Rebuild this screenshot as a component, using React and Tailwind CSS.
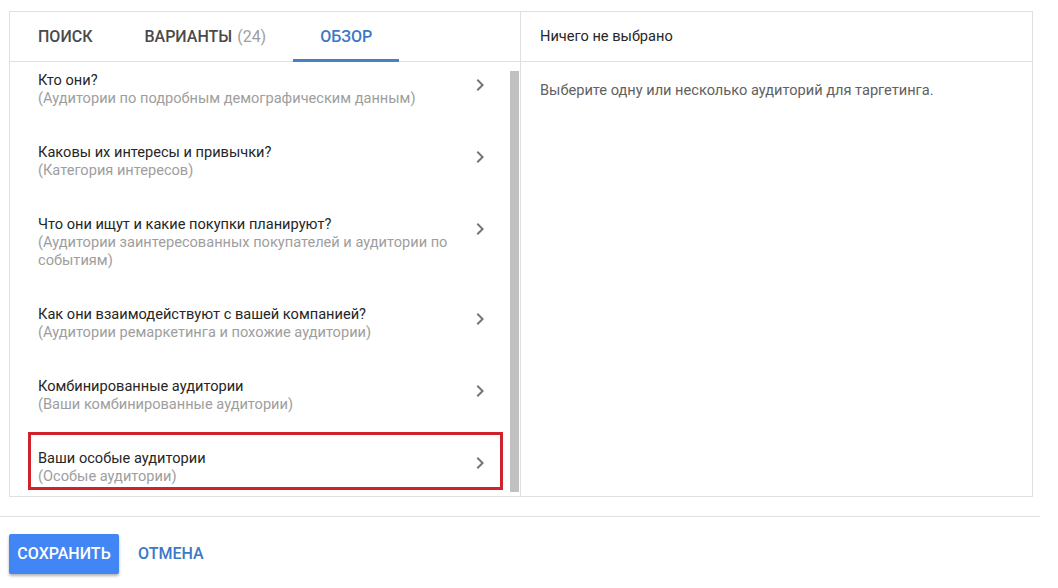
import React from "react";

const items = [
  { t: "Кто они?", s: "(Аудитории по подробным демографическим данным)" },
  { t: "Каковы их интересы и привычки?", s: "(Категория интересов)" },
  { t: "Что они ищут и какие покупки планируют?", s: "(Аудитории заинтересованных покупателей и аудитории по событиям)" },
  { t: "Как они взаимодействуют с вашей компанией?", s: "(Аудитории ремаркетинга и похожие аудитории)" },
  { t: "Комбинированные аудитории", s: "(Ваши комбинированные аудитории)" },
  { t: "Ваши особые аудитории", s: "(Особые аудитории)", sel: true },
];

function Chevron() {
  return (
    <svg width="24" height="24" viewBox="0 0 24 24" className="shrink-0 mt-[2px]">
      <path d="M10 6L8.59 7.41 13.17 12l-4.58 4.59L10 18l6-6z" fill="#757575" />
    </svg>
  );
}

export default function App() {
  return (
    <div className="w-[1058px] h-[588px] bg-white overflow-hidden" style={{ fontFamily: "Roboto, 'Noto Sans', sans-serif" }}>
      <div className="pt-[11px] pl-[9px]">
        <div className="w-[1024px] h-[486px] border border-[#e0e0e0] flex">
          {/* Left panel */}
          <div className="w-[511px] border-r border-[#e0e0e0] flex flex-col">
            <div className="h-[50px] border-b border-[#e0e0e0] flex items-stretch text-[16px] font-medium uppercase">
              <div className="pl-7 pr-[25px] flex items-center text-[#4a4a4a]">ПОИСК</div>
              <div className="px-[27px] flex items-center text-[#4a4a4a]">
                ВАРИАНТЫ<span className="ml-[5px] font-normal text-[#9e9e9e]">(24)</span>
              </div>
              <div className="relative w-[106px] flex items-center justify-center text-[#3b78c8]">
                ОБЗОР
                <div className="absolute left-0 right-0 -bottom-px h-[3px] bg-[#4a7fc1]" />
              </div>
            </div>
            <div className="flex-1 flex min-h-0">
              <div className="flex-1 overflow-hidden">
                <div className="-mt-[8px]">
                  {items.map((it, i) => (
                    <div
                      key={i}
                      className={
                        "ml-[18px] mr-[7px] pl-[7px] pr-[8px] pt-[14px] pb-[2px] border-[3px] flex items-start gap-2 " +
                        (it.sel ? "border-[#d0222b]" : "border-transparent") +
                        (i > 0 ? " mt-[14px]" : "")
                      }
                    >
                      <div className="flex-1 text-[14.6px] leading-[18px]">
                        <div className="text-[#262626]">{it.t}</div>
                        <div className="text-[#9e9e9e]">{it.s}</div>
                      </div>
                      <Chevron />
                    </div>
                  ))}
                </div>
              </div>
              <div className="w-[9px] pt-[9px] pb-[4px] mr-px">
                <div className="h-full bg-[#c1c1c1]" />
              </div>
            </div>
          </div>
          {/* Right panel */}
          <div className="flex-1 flex flex-col">
            <div className="h-[50px] border-b border-[#e0e0e0] flex items-center px-[19px] text-[14.6px] text-[#262626]">
              Ничего не выбрано
            </div>
            <div className="px-[19px] pt-[19px] text-[14.6px] leading-[18px] text-[#616161]">
              Выберите одну или несколько аудиторий для таргетинга.
            </div>
          </div>
        </div>
      </div>
      <div className="mt-[19px] w-[1040px] border-t border-[#e0e0e0]" />
      <div className="pl-[9px] pt-[17px] flex items-center gap-[19px]">
        <button className="h-[40px] w-[110px] rounded-[2px] bg-[#4285f4] text-white text-[16px] font-medium uppercase shadow-[0_2px_3px_rgba(0,0,0,0.3)]">
          СОХРАНИТЬ
        </button>
        <button className="text-[16px] font-medium uppercase text-[#3b78c8]">ОТМЕНА</button>
      </div>
    </div>
  );
}
